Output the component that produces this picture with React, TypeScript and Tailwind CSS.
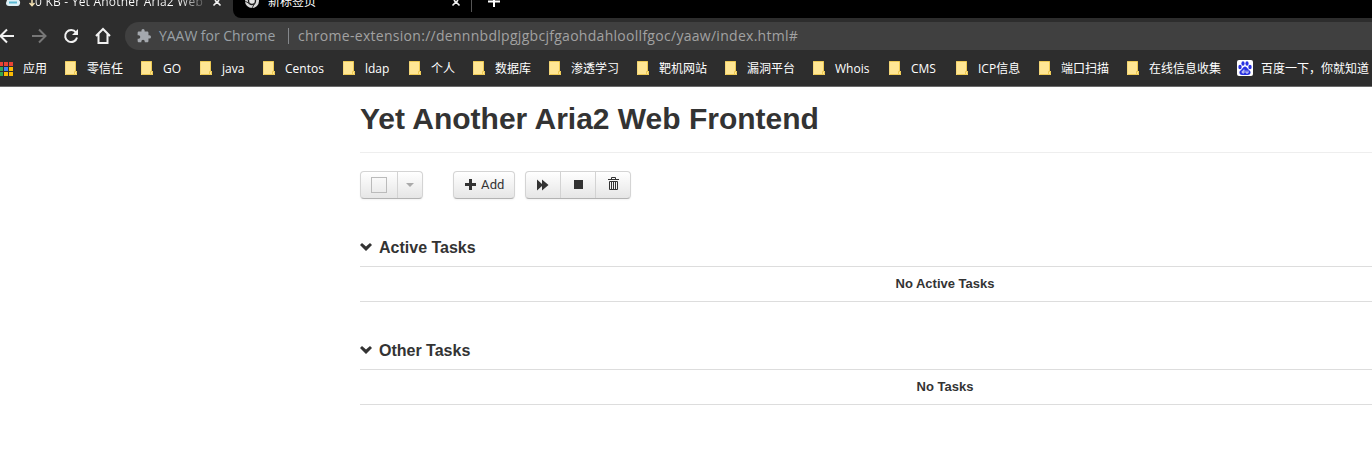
import React from "react";

const bookmarks = [
  { label: "零信任", w: "w-[76px]" },
  { label: "GO", w: "w-[59px]" },
  { label: "java", w: "w-[63px]" },
  { label: "Centos", w: "w-[80px]" },
  { label: "ldap", w: "w-[66px]" },
  { label: "个人", w: "w-[64px]" },
  { label: "数据库", w: "w-[76px]" },
  { label: "渗透学习", w: "w-[88px]" },
  { label: "靶机网站", w: "w-[88px]" },
  { label: "漏洞平台", w: "w-[88px]" },
  { label: "Whois", w: "w-[76px]" },
  { label: "CMS", w: "w-[67px]" },
  { label: "ICP信息", w: "w-[83px]" },
  { label: "端口扫描", w: "w-[88px]" },
  { label: "在线信息收集", w: "w-[110px]" },
];

const appColors = ["#ea4335", "#ea4335", "#ea4335", "#34a853", "#4285f4", "#fbbc04", "#34a853", "#fbbc04", "#fbbc04"];

function Folder() {
  return (
    <svg width="12" height="15" viewBox="0 0 12 15" className="shrink-0">
      <path d="M0 0.500H11V10H12V14H0Z" fill="#ffe694" />
      <path d="M0.500 0.500H10.500V10M0 13.500H9.500V10.500H11.500V13.500H9.500" fill="none" stroke="#edc953" />
      <path d="M0.500 0.500V14" stroke="#f5d778" />
    </svg>
  );
}

function CloseIcon() {
  return (
    <svg width="10" height="7" viewBox="0 0 10 7" className="shrink-0">
      <path d="M1.500 5.500L5 2L8.500 5.500M4.500 2L3 0M5.500 2L7 0" fill="none" stroke="#f1f1f1" strokeWidth="1.600" />
    </svg>
  );
}

function Tabs() {
  return (
    <div className="flex h-[18px] bg-[#2d2d2d] text-[12px] text-white">
      <div className="flex h-[18px] w-[233px] shrink-0 overflow-hidden">
        <svg width="16" height="7" viewBox="0 0 16 7" className="ml-[5px] shrink-0">
          <path d="M2 0H14Q16 2 14.500 5Q14 6 12 6H4Q1 6 1 3Z" fill="#dff1f7" />
          <path d="M4 2.500H12" stroke="#5bb9d3" strokeWidth="2" />
        </svg>
        <svg width="6" height="7" viewBox="0 0 6 7" className="ml-[8px] shrink-0">
          <path d="M3 0V5M0.500 3L3 5.700L5.500 3" fill="none" stroke="#f6e3b4" strokeWidth="1.500" />
        </svg>
        <span className="-mt-[7px] w-[170px] overflow-hidden bg-gradient-to-r from-white from-85% to-[#555] bg-clip-text leading-[18px] tracking-[0.22px] whitespace-nowrap text-transparent">0 KB - Yet Another Aria2 Web</span>
        <div className="ml-[7px]"><CloseIcon /></div>
      </div>
      <div className="flex h-[18px] grow overflow-hidden rounded-bl-[8px] bg-black">
        <svg width="16" height="9" viewBox="0 0 16 9" className="ml-[11px] shrink-0">
          <circle cx="8" cy="1" r="7" fill="#d8d8d8" />
          <circle cx="8" cy="1" r="3.500" fill="#e5e5e5" stroke="#1c1c1c" strokeWidth="1.400" />
          <path d="M1 1L6 4M8 8L11 3" stroke="#333" />
        </svg>
        <span className="-mt-[7px] ml-[8px] w-[182px] leading-[18px] whitespace-nowrap">新标签页</span>
        <div className="ml-px"><CloseIcon /></div>
        <div className="ml-[10px] h-[12px] w-px bg-[#555]" />
        <svg width="12" height="8" viewBox="0 0 12 8" className="ml-[16px]">
          <path d="M0 1.500H12M6 0V7" stroke="white" strokeWidth="2" />
        </svg>
      </div>
    </div>
  );
}

function AddressBar() {
  return (
    <div className="flex h-[36px] shrink-0 items-center">
      <svg width="125" height="28" viewBox="0 0 125 28" fill="none" stroke="#f1f1f1" strokeWidth="2" className="shrink-0">
        <path d="M14 14H1M7 7.500L0.500 14L7 20.500" />
        <path d="M32 14H45M39 7.500L45.500 14L39 20.500" stroke="#777" />
        <path d="M76 10.500A6 6 0 1 0 77 15.500" />
        <path d="M78 7V13H72Z" fill="#f1f1f1" stroke="none" />
        <path d="M96 14L103 7L110 14M98.500 12V21H107.500V12" />
      </svg>
      <div className="flex h-[28px] grow items-center rounded-l-[14px] bg-[#404040] text-[#9aa0a6]">
        <svg width="14" height="14" viewBox="1 1 22 22" className="-mt-px ml-[12px] shrink-0 fill-[#a4a8ae]">
          <path d="M20.500 11H19V7c0-1.100-.9-2-2-2h-4V3.500a2.500 2.500 0 0 0-5 0V5H4c-1.100 0-2 .9-2 2v3.800h1.500a2.700 2.700 0 0 1 0 5.400H2V20c0 1.100.9 2 2 2h3.800v-1.500a2.700 2.700 0 0 1 5.400 0V22H17c1.100 0 2-.9 2-2v-4h1.500a2.500 2.500 0 0 0 0-5Z" />
        </svg>
        <span className="-mt-[2px] ml-[8px] w-[129px] text-[14px] tracking-[-0.05px] whitespace-nowrap">YAAW for Chrome</span>
        <span className="h-[16px] w-px bg-[#85888c]" />
        <span className="-mt-[2px] ml-[9px] text-[14px] tracking-[0.285px] whitespace-nowrap text-[#a2a2a2]">chrome-extension://dennnbdlpgjgbcjfgaohdahloollfgoc/yaaw/index.html#</span>
      </div>
    </div>
  );
}

function BookmarkBar() {
  return (
    <div className="flex h-[29px] items-center text-[12px] whitespace-nowrap text-white">
      <div className="flex w-[65px] shrink-0 items-center">
        <svg width="14" height="14" viewBox="0 0 14 14">
          {appColors.map((color, i) => (
            <rect key={i} x={(i % 3) * 5 - 1} y={Math.floor(i / 3) * 5} width="4" height="4" fill={color} />
          ))}
        </svg>
        <span className="ml-[9px]">应用</span>
      </div>
      {bookmarks.map(({ label, w }) => (
        <div key={label} className={`flex shrink-0 items-center gap-[10px] ${w}`}>
          <Folder />
          <span>{label}</span>
        </div>
      ))}
      <svg width="16" height="16" viewBox="0 0 16 16" className="-mt-px shrink-0">
        <rect width="16" height="16" rx="2" fill="white" />
        <g fill="#2932e1">
          <ellipse cx="3" cy="7" rx="1.700" ry="2.200" />
          <ellipse cx="6" cy="3.500" rx="1.600" ry="2.200" />
          <ellipse cx="10" cy="3.500" rx="1.600" ry="2.200" />
          <ellipse cx="13" cy="7" rx="1.700" ry="2.200" />
          <path d="M8 6.500C6 6.500 5.500 9 3.500 10.500S2.500 15 5 15H11C13.500 15 14.500 12 12.500 10.500S10 6.500 8 6.500Z" />
        </g>
        <path d="M7 9.500V13H5.500Q4.500 12 5.500 11H7M9 10.500V13H11V10.500" stroke="white" strokeWidth="0.800" fill="none" />
      </svg>
      <span className="ml-[8px]">百度一下，你就知道</span>
    </div>
  );
}

function ButtonGroup({ children }: { children: React.ReactNode }) {
  return (
    <div className="flex h-[28px] shrink-0 divide-x divide-[#d3d3d3] overflow-hidden rounded-[4px] border border-[#d4d4d4] border-b-[#b3b3b3] bg-gradient-to-b from-white to-[#e6e6e6] shadow-[0_1px_2px_rgba(0,0,0,0.05)]">
      {children}
    </div>
  );
}

function Toolbar() {
  return (
    <div className="mt-[18px] flex text-[13px] text-[#333]">
      <ButtonGroup>
        <button className="flex w-[37px] items-center justify-center"><span className="size-[16px] border border-[#bbb]" /></button>
        <button className="flex w-[24px] items-center justify-center"><svg width="8" height="4" viewBox="0 0 8 4"><path d="M0 0H8L4 4Z" fill="#aaa" /></svg></button>
      </ButtonGroup>
      <div className="ml-[30px] flex gap-[10px]">
        <ButtonGroup>
          <button className="flex w-[60px] items-center pl-[11px]">
            <svg width="11" height="11" viewBox="0 0 11 11" className="-mt-px"><path d="M0 5.500H11M5.500 0V11" stroke="#333" strokeWidth="3" /></svg>
            <span className="ml-[5px] font-['Roboto',sans-serif] tracking-[0.15px]">Add</span>
          </button>
        </ButtonGroup>
        <ButtonGroup>
          <button className="w-[35px] pb-px pl-[11px]"><svg width="12" height="12" viewBox="0 0 12 12"><path d="M0 0.500L5 5V0.500L11.500 6L5 11.500V7L0 11.500Z" fill="#333" /></svg></button>
          <button className="flex w-[35px] items-center pb-px pl-[13px]"><span className="size-[9px] bg-[#333]" /></button>
          <button className="w-[34px] pb-[2px] pl-[12px]">
            <svg width="11" height="14" viewBox="0 0 11 14" fill="none" stroke="#333">
              <path d="M0 2.500H11M3.500 2V0.500H7.500V2" />
              <path d="M1.500 4.500H9.500V12.500H1.500ZM3.500 4V12M5.500 4V12M7.500 4V12" />
            </svg>
          </button>
        </ButtonGroup>
      </div>
    </div>
  );
}

function TaskSection({ title, empty }: { title: string; empty: string }) {
  return (
    <section className="h-[103px]">
      <h2 className="flex h-[30px] items-center text-[16px] font-bold">
        <svg width="12" height="8" viewBox="0 0 12 8" className="-mt-px mr-[7px]"><path d="M0 2L2 0L6 3.500L10 0L12 2L6 8Z" fill="#333" /></svg>
        <span className="mt-px">{title}</span>
      </h2>
      <div className="mt-[4px] flex h-[36px] items-center justify-center border-y border-[#ddd] text-[13px] font-bold">{empty}</div>
    </section>
  );
}

export default function App() {
  return (
    <div className="h-[461px] w-[1372px] overflow-hidden bg-white">
      <header className="h-[87px] overflow-hidden border-b border-[#6a6a6a] bg-[#2d2d2d] font-['Open_Sans','Noto_Sans_CJK_SC',sans-serif]">
        <Tabs />
        <AddressBar />
        <BookmarkBar />
      </header>
      <main className="ml-[360px] w-[1170px] font-['Liberation_Sans',sans-serif] text-[#333]">
        <h1 className="h-[66px] border-b border-[#eee] pt-[12px] text-[30px] leading-[40px] font-bold">Yet Another Aria2 Web Frontend</h1>
        <Toolbar />
        <div className="mt-[33px]">
          <TaskSection title="Active Tasks" empty="No Active Tasks" />
          <TaskSection title="Other Tasks" empty="No Tasks" />
        </div>
      </main>
    </div>
  );
}
